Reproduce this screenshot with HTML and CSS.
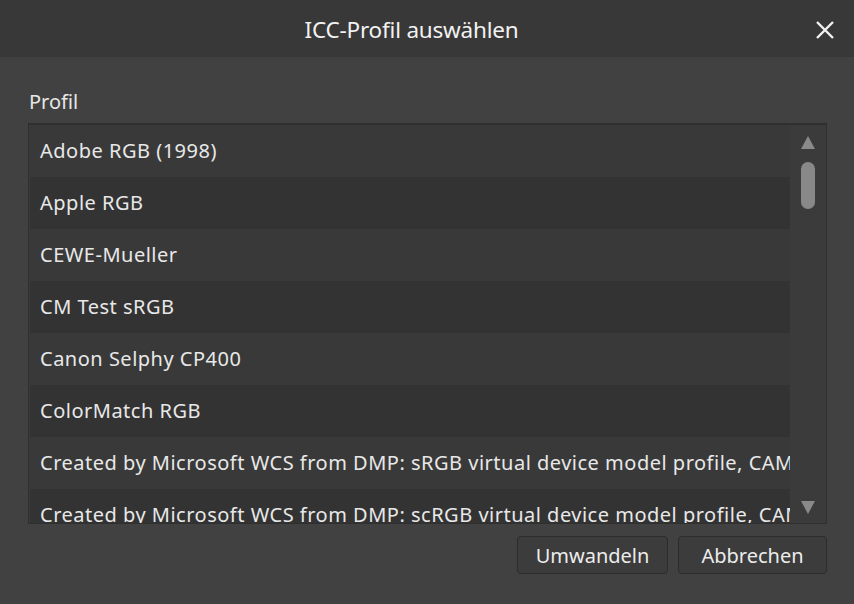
FILE: index.html
```html
<!DOCTYPE html>
<html lang="de">
<head>
<meta charset="utf-8">
<title>ICC-Profil auswählen</title>
<link rel="stylesheet" href="styles.css">
</head>
<body>
<div class="dialog">
  <header class="titlebar">
    <span class="title">ICC-Profil auswählen</span>
    <button class="close" aria-label="Schließen">
      <svg width="20" height="20" viewBox="0 0 20 20"><path d="M2 2 L18 18 M18 2 L2 18" stroke="#f2f2f2" stroke-width="2.4" fill="none"/></svg>
    </button>
  </header>
  <main class="content">
    <div class="label">Profil</div>
    <div class="listbox">
      <ul class="rows">
        <li class="row">Adobe RGB (1998)</li>
        <li class="row">Apple RGB</li>
        <li class="row">CEWE-Mueller</li>
        <li class="row">CM Test sRGB</li>
        <li class="row">Canon Selphy CP400</li>
        <li class="row">ColorMatch RGB</li>
        <li class="row">Created by Microsoft WCS from DMP: sRGB virtual device model profile, CAM02 &amp; Gamut</li>
        <li class="row">Created by Microsoft WCS from DMP: scRGB virtual device model profile, CAM02 &amp; Gamut</li>
      </ul>
      <div class="scrollbar">
        <div class="arrow up"></div>
        <div class="track"><div class="thumb"></div></div>
        <div class="arrow down"></div>
      </div>
    </div>
    <div class="buttons">
      <button class="btn">Umwandeln</button>
      <button class="btn">Abbrechen</button>
    </div>
  </main>
</div>
</body>
</html>
```

FILE: styles.css
```css
* { box-sizing: border-box; }
html, body {
  margin: 0;
  padding: 0;
  background: #414141;
  font-family: "Noto Sans", "Open Sans", sans-serif;
  color: #e8e8e8;
}
.dialog {
  width: 854px;
  height: 604px;
  display: flex;
  flex-direction: column;
}
.titlebar {
  height: 57px;
  background: #383838;
  display: flex;
  align-items: center;
  justify-content: center;
  padding-right: 31px;
  position: relative;
}
.title {
  font-size: 22.5px;
  color: #f2f2f2;
  letter-spacing: -0.2px;
  padding-top: 2px;
}
.close {
  position: absolute;
  right: 18px;
  top: 19px;
  width: 22px;
  height: 22px;
  padding: 0;
  border: none;
  background: none;
  display: flex;
  align-items: center;
  justify-content: center;
}
.content {
  flex: 1;
  padding: 29px 27px 0 28px;
  display: flex;
  flex-direction: column;
}
.label {
  font-size: 20px;
  line-height: 32px;
  color: #e6e6e6;
  padding-left: 1px;
  margin-bottom: 5px;
}
.listbox {
  height: 401px;
  border: 1px solid #2f2f2f;
  border-top-width: 2px;
  background: #3b3b3b;
  display: flex;
  overflow: hidden;
}
.rows {
  list-style: none;
  margin: 0;
  padding: 0 0 0 1px;
  flex: 1;
  min-width: 0;
  overflow: hidden;
}
.row {
  height: 52px;
  line-height: 52px;
  padding-left: 10px;
  font-size: 20px;
  letter-spacing: 0.5px;
  white-space: nowrap;
  overflow: hidden;
  color: #e8e8e8;
  background: #333333;
}
.row:nth-child(odd) { background: #393939; }
.scrollbar {
  width: 36px;
  flex: none;
  background: #3b3b3b;
  display: flex;
  flex-direction: column;
  align-items: center;
  padding: 11px 0 9px;
}
.arrow {
  width: 0;
  height: 0;
  border-left: 7px solid transparent;
  border-right: 7px solid transparent;
}
.arrow.up { border-bottom: 13px solid #8a8a8a; }
.arrow.down { border-top: 13px solid #8a8a8a; }
.track {
  flex: 1;
  width: 14px;
  padding-top: 13px;
}
.thumb {
  width: 14px;
  height: 47px;
  border-radius: 7px;
  background: #888888;
}
.buttons {
  display: flex;
  justify-content: flex-end;
  gap: 10px;
  margin-top: 12px;
}
.btn {
  height: 38px;
  border: 1px solid #2c2c2c;
  border-radius: 4px;
  background: #3c3c3c;
  color: #ececec;
  font-family: "Noto Sans", "Open Sans", sans-serif;
  font-size: 20px;
  padding: 0;
  width: 151px;
}
.btn + .btn { width: 149px; }
```
